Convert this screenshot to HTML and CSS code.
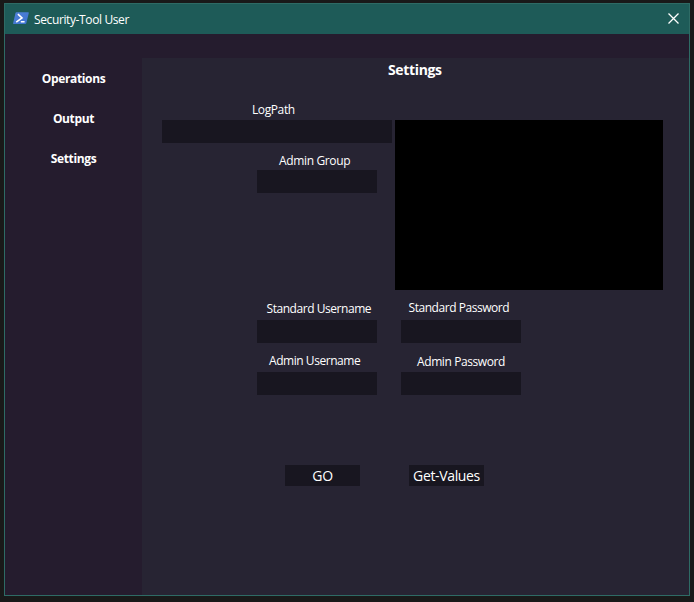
FILE: index.html
```html
<!DOCTYPE html>
<html lang="en">
<head>
<meta charset="utf-8">
<title>Security-Tool User</title>
<link rel="stylesheet" href="styles.css">
</head>
<body>
<div class="window">
  <header class="titlebar">
    <svg class="app-icon" width="16" height="13" viewBox="0 0 16 13">
      <defs><linearGradient id="blue" x1="0" y1="0" x2="1" y2="1"><stop offset="0" stop-color="#4f82d8"/><stop offset="1" stop-color="#3d72d0"/></linearGradient></defs>
      <path d="M3.4 .3H15.2Q16 .3 15.8 1.1L13.3 11.3Q13.1 12 12.3 12H.6Q-.1 12 .1 11.3L2.5 1.1Q2.7 .3 3.4 .3Z" fill="url(#blue)"/>
      <path d="M4.9 2.2L9 6L3.2 10.1M7.8 9.8H11.6" fill="none" stroke="#fff" stroke-width="1.6"/>
    </svg>
    <span class="title">Security-Tool User</span>
    <svg class="close" width="11" height="11" viewBox="0 0 11 11"><path d="M.5 .5L10.5 10.5M10.5 .5L.5 10.5" stroke="#fff" stroke-width="1.3"/></svg>
  </header>
  <div class="body">
    <nav class="nav">
      <a>Operations</a>
      <a>Output</a>
      <a>Settings</a>
    </nav>
    <main class="panel">
      <h1>Settings</h1>
      <section class="top">
        <div class="paths">
          <label class="log-label">LogPath</label>
          <div class="input wide"></div>
          <label class="group-label">Admin Group</label>
          <div class="input group"></div>
        </div>
        <div class="console"></div>
      </section>
      <section class="credentials">
        <div class="field"><label class="std-user">Standard Username</label><div class="input"></div></div>
        <div class="field"><label class="std-pass">Standard Password</label><div class="input"></div></div>
        <div class="field"><label class="adm-user">Admin Username</label><div class="input"></div></div>
        <div class="field"><label class="adm-pass">Admin Password</label><div class="input"></div></div>
      </section>
      <div class="actions">
        <button class="go">GO</button>
        <button class="get">Get-Values</button>
      </div>
    </main>
  </div>
</div>
</body>
</html>
```
FILE: styles.css
```css
* { box-sizing: border-box; }
body {
  margin: 0;
  height: 602px;
  padding: 3px 4px 6px;
  overflow: hidden;
  background: #191919;
  color: #fff;
  font: 12px/16px "Open Sans", "Noto Sans", sans-serif;
}
.window {
  display: flex;
  flex-direction: column;
  width: 686px;
  height: 593px;
  border: 1px solid #2e6b65;
  background: #251c2e;
}
.titlebar {
  display: flex;
  align-items: center;
  height: 30px;
  padding: 0 10px 0 8px;
  background: #1e5b58;
}
.app-icon { margin-bottom: 1px; }
.title { margin-left: 5px; padding-top: 1px; letter-spacing: -0.38px; white-space: nowrap; }
.close { margin-left: auto; margin-bottom: 1px; }
.body { display: flex; flex: 1; padding-top: 24px; }
.nav {
  display: flex;
  flex-direction: column;
  align-items: center;
  gap: 24px;
  width: 137px;
  padding-top: 13px;
  font-weight: 700;
}
.nav a { letter-spacing: -0.35px; }
.panel { flex: 1; background: #272433; }
h1 {
  margin: 0;
  padding: 3px 0 1px 246px;
  font-size: 14px;
  line-height: 18px;
  letter-spacing: -0.35px;
}
.top { display: flex; gap: 3px; height: 188px; padding-left: 20px; margin-top: 22px; }
.paths { width: 230px; }
.console { width: 268px; height: 170px; margin-top: 18px; background: #000; }
label { display: block; height: 18px; white-space: nowrap; letter-spacing: -0.4px; }
.input { width: 120px; height: 23px; background: #181620; }
.input.wide { width: 230px; }
.input.group { margin-left: 95px; }
.log-label { padding-left: 90px; }
.group-label { height: 17px; margin-top: 10px; padding-left: 117px; letter-spacing: -0.35px; }
.credentials {
  display: grid;
  grid-template-columns: 120px 120px;
  column-gap: 24px;
  row-gap: 9px;
  margin: 11px 0 0 115px;
}
.field { height: 43px; }
.field label { height: 19px; }
.field .std-user { padding-left: 9.5px; letter-spacing: -0.45px; }
.field .std-pass { padding-left: 7.5px; line-height: 14px; letter-spacing: -0.45px; }
.field .adm-user { padding-left: 12px; letter-spacing: -0.45px; }
.field .adm-pass { padding: 1px 0 0 16px; }
.actions { display: flex; gap: 49px; margin: 69px 0 0 143px; }
button {
  width: 75px;
  height: 21px;
  padding: 0;
  border: 0;
  background: #181620;
  color: #fff;
  font: 14px/21px "Open Sans", "Noto Sans", sans-serif;
  letter-spacing: -0.35px;
  white-space: nowrap;
}
```
